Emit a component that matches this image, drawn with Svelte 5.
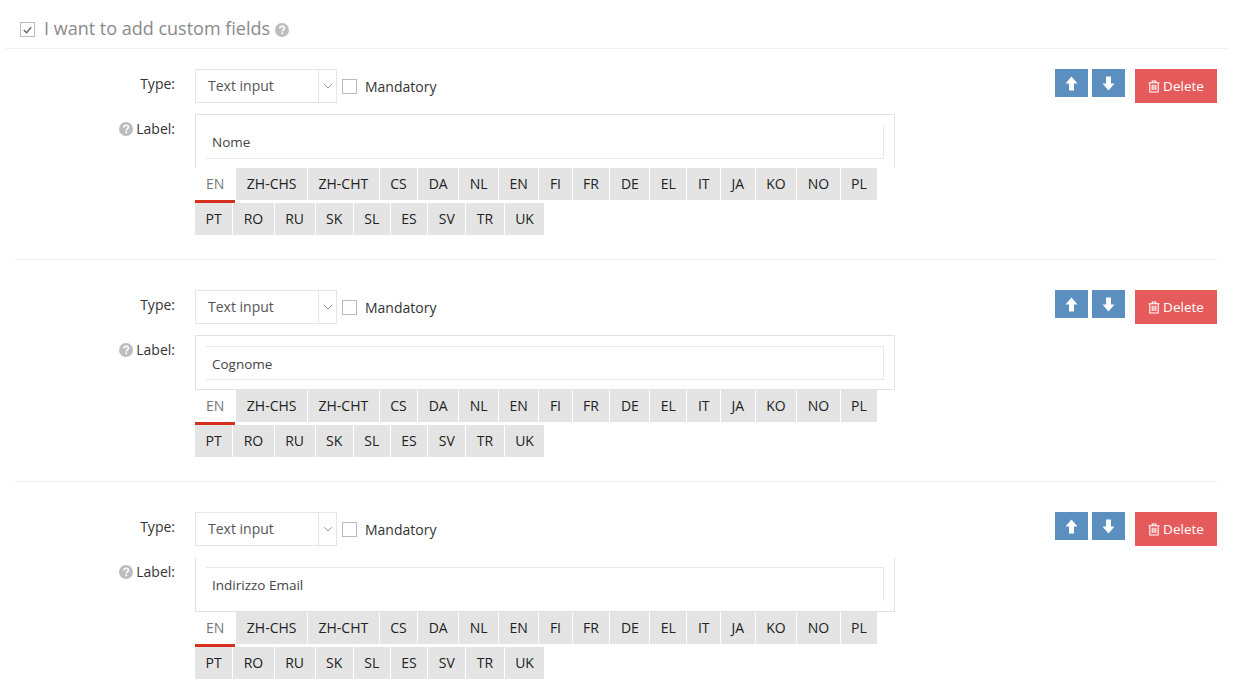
<script>
const TABS = [
  "ZH-CHS", "ZH-CHT", "CS", "DA", "NL", "EN", "FI", "FR", "DE", "EL", "IT", "JA", "KO", "NO", "PL",
  "PT", "RO", "RU", "SK", "SL", "ES", "SV", "TR", "UK",
];
// the box/input borders differ slightly from row to row in the original
const FIELDS = [
  { value: "Nome", box: "no-bottom", input: "no-top" },
  { value: "Cognome", box: "tall", input: "" },
  { value: "Indirizzo Email", box: "tall no-top", input: "no-bottom" },
];
</script>

{#snippet help()}
  <svg class="help" viewBox="0 0 14 14" width="14" height="14">
    <circle cx="7" cy="7" r="7" fill="#bdbdbd" />
    <path d="M4.700 5.500c.1-1.500 1.100-2.300 2.400-2.300s2.300.8 2.300 2c0 1.700-2.100 1.700-2.100 3.200" fill="none" stroke="#fff" stroke-width="1.600" />
    <rect x="6.400" y="9.400" width="1.800" height="1.800" fill="#fff" />
  </svg>
{/snippet}

<div class="page">
  <div class="head">
    <span class="check on">
      <svg viewBox="0 0 14 14" width="14" height="14"><path d="M3 7l3 3 5-6" fill="none" stroke="#666" stroke-width="1.500" /></svg>
    </span>
    <span class="title">I want to add custom fields</span>
    {@render help()}
  </div>

  <div class="fields">
    {#each FIELDS as field, i}
      <div class="field" class:mid={i === 1} class:last={i === FIELDS.length - 1}>
        <div class="body">
          <div class="row">
            <div class="lbl">Type:</div>
            <div class="select">
              <span class="sel-text">Text input</span>
              <span class="caret">
                <svg viewBox="0 0 10 6" width="10" height="6"><path d="M1 1l4 4 4-4" fill="none" stroke="#999" stroke-width="1" /></svg>
              </span>
            </div>
            <span class="check"></span>
            <span class="mand">Mandatory</span>
          </div>
          <div class="row second">
            <div class="lbl">{@render help()} Label:</div>
            <div class="multi">
              <div class="box {field.box}">
                <div class="input {field.input}">{field.value}</div>
              </div>
              <div class="tabs">
                <span class="tab active">EN</span>
                {#each TABS as t}
                  <span class="tab">{t}</span>
                {/each}
              </div>
            </div>
          </div>
        </div>
        <div class="actions">
          <button class="btn blue" aria-label="Up">
            <svg viewBox="0 0 13 15" width="13" height="15"><path d="M6.500 0.500L0.500 7.500h3.500v7h5v-7h3.500z" fill="#fff" /></svg>
          </button>
          <button class="btn blue" aria-label="Down">
            <svg viewBox="0 0 13 15" width="13" height="15"><path d="M6.500 14.500l6-7H9v-7H4v7H0.500z" fill="#fff" /></svg>
          </button>
          <button class="btn red">
            <svg viewBox="0 0 12 13" width="12" height="13"><path d="M4.200 2.500V1h3.600v1.500M0.500 2.800h11M1.800 2.800V12h8.400V2.800M4.200 4.800V10M6 4.800V10M7.800 4.800V10" fill="none" stroke="#fff" stroke-width="1.100" /></svg>
            Delete
          </button>
        </div>
      </div>
    {/each}
  </div>
</div>

<style>
  :global(body) {
    margin: 0;
    background: #fff;
  }
  .page {
    font-family: "Open Sans", sans-serif;
    font-size: 14px;
    color: #333;
    padding: 15px 5px 0 5px;
    width: 1223px;
    height: 682px;
    overflow: hidden;
  }
  .head {
    display: flex;
    align-items: center;
    height: 29px;
    padding-bottom: 4px;
    padding-left: 15px;
    border-bottom: 1px solid #f0f0f0;
  }
  .title {
    font-size: 18px;
    color: #8a8a8a;
    margin: 0 5px 4px 9px;
  }
  .help {
    flex-shrink: 0;
    vertical-align: -2px;
  }
  .check {
    box-sizing: border-box;
    width: 15px;
    height: 15px;
    border: 1px solid #bbb;
    background: #fff;
    display: inline-flex;
    flex-shrink: 0;
  }
  .fields {
    margin-top: 20px;
  }
  .field {
    box-sizing: border-box;
    display: flex;
    justify-content: space-between;
    margin: 0 11px 30px 10px;
    height: 191px;
    border-bottom: 1px solid #f0f0f0;
  }
  .field.mid {
    height: 192px;
  }
  .field.last {
    border-bottom: 0;
  }
  .row {
    display: flex;
    align-items: flex-start;
  }
  .second {
    margin-top: 11px;
  }
  .lbl {
    width: 180px;
    text-align: right;
    padding-right: 20px;
    box-sizing: border-box;
    line-height: 30px;
    color: #333;
    height: 30px;
  }
  .select {
    box-sizing: border-box;
    width: 142px;
    height: 34px;
    border: 1px solid #e5e5e5;
    display: flex;
    align-items: center;
    justify-content: space-between;
  }
  .sel-text {
    padding: 0 0 2px 12px;
    color: #555;
  }
  .caret {
    box-sizing: border-box;
    width: 18px;
    height: 32px;
    border-left: 1px solid #e5e5e5;
    display: flex;
    align-items: center;
    justify-content: center;
  }
  .row > .check {
    margin: 10px 8px 0 5px;
  }
  .mand {
    padding-top: 2px;
    line-height: 32px;
    color: #333;
  }
  .multi {
    width: 700px;
  }
  .box {
    box-sizing: border-box;
    border: 1px solid #e2e2e2;
    height: 54px;
    padding: 10px 10px 0;
  }
  .box.tall {
    height: 55px;
  }
  .box.no-bottom {
    border-bottom: 0;
  }
  .box.no-top {
    border-top: 0;
  }
  .input {
    box-sizing: border-box;
    border: 1px solid #e8e8e8;
    border-left: 0;
    height: 34px;
    line-height: 32px;
    padding-left: 6px;
    color: #444;
    font-size: 13.500px;
  }
  .box.tall .input {
    padding-top: 1px;
  }
  .input.no-top {
    border-top-color: transparent;
  }
  .input.no-bottom {
    border-bottom-color: transparent;
  }
  .tabs {
    display: flex;
    flex-wrap: wrap;
    width: 690px;
    gap: 3px 1px;
  }
  .tab {
    height: 32px;
    line-height: 32px;
    padding: 0 10.500px;
    background: #e4e4e4;
    color: #222;
    font-size: 14px;
  }
  .tab.active {
    background: #fff;
    color: #777;
    border-bottom: 3px solid #d5301f;
    padding: 0 11px;
    height: 32px;
    margin-bottom: -3px;
  }
  .actions {
    display: flex;
    align-items: flex-start;
    gap: 4px;
  }
  .btn {
    border: 0;
    font-family: inherit;
    color: #fff;
    display: inline-flex;
    align-items: center;
    justify-content: center;
    padding: 0;
  }
  .blue {
    width: 33px;
    height: 28px;
    background: #5a8fc0;
  }
  .red {
    width: 82px;
    height: 34px;
    background: #e55b5b;
    font-size: 13.500px;
    gap: 3px;
    margin-left: 6px;
  }
</style>
